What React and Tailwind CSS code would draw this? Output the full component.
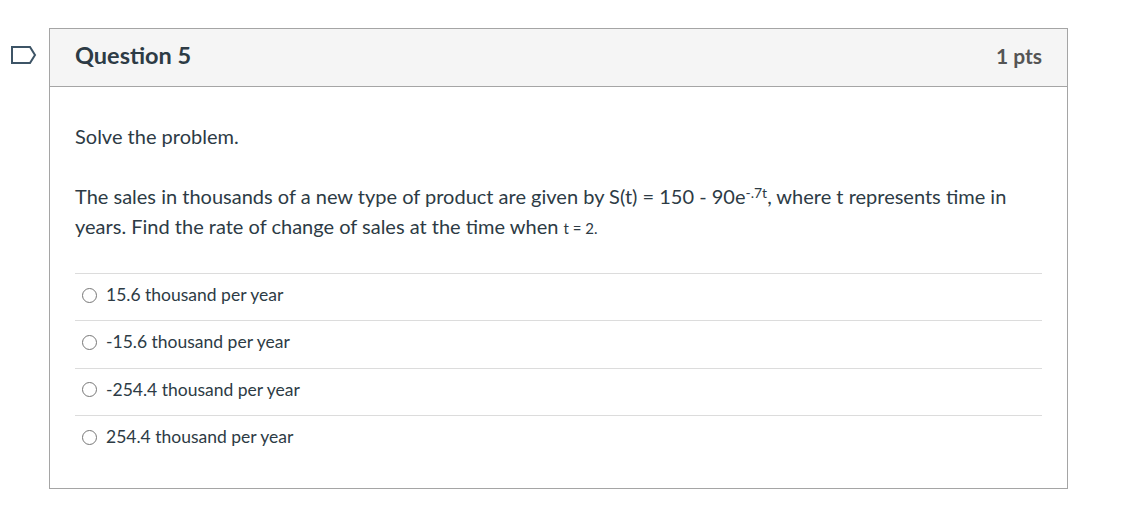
const answers = [
  '15.6 thousand per year',
  '-15.6 thousand per year',
  '-254.4 thousand per year',
  '254.4 thousand per year',
]

export default function App() {
  return (
    <div className="w-[1136px] h-[506px] bg-white font-['Lato',sans-serif] text-[#2d3b45]">
      <div className="flex pt-[28px]">
        {/* Flag */}
        <div className="w-[49px] flex justify-center pt-[17px]">
          <svg width="28" height="20" viewBox="0 0 28 20" className="ml-[-1px]">
            <path d="M2 2 H20 L25 10 L20 18 H2 Z" fill="none" stroke="#3d5466" strokeWidth="2" strokeLinejoin="miter" />
          </svg>
        </div>

        {/* Question box */}
        <div className="w-[1019px] h-[461px] border border-[#a5a5a5] flex flex-col">
          <div className="h-[58px] bg-[#f5f5f5] border-b border-[#a5a5a5] flex items-center justify-between px-[25px] pb-[3px]">
            <h2 className="text-[23.5px] font-bold">Question 5</h2>
            <span className="text-[21px] font-bold text-[#555]">1 pts</span>
          </div>

          <div className="px-[25px] pt-[34px]">
            <p className="text-[20px] leading-[30px]">Solve the problem.</p>
            <p className="text-[20px] leading-[30px] mt-[30px]">
              The sales in thousands of a new type of product are given by S(t) = 150 - 90e
              <sup className="text-[14px] leading-none relative top-[-6px]">-.7t</sup>, where t represents time in years. Find the rate of change of sales at the time when{' '}
              <span className="text-[15px]">t = 2.</span>
            </p>

            <div className="mt-[30px]">
              {answers.map((a) => (
                <div key={a} className="h-[47.4px] border-t border-[#dcdcdc] flex items-center pl-[7px] pb-[4px]">
                  <span className="w-[15px] h-[15px] rounded-full border border-[#777] bg-white" />
                  <span className="ml-[9px] text-[17.5px] text-[#2d3b45]">{a}</span>
                </div>
              ))}
            </div>
          </div>
        </div>
      </div>
    </div>
  )
}
